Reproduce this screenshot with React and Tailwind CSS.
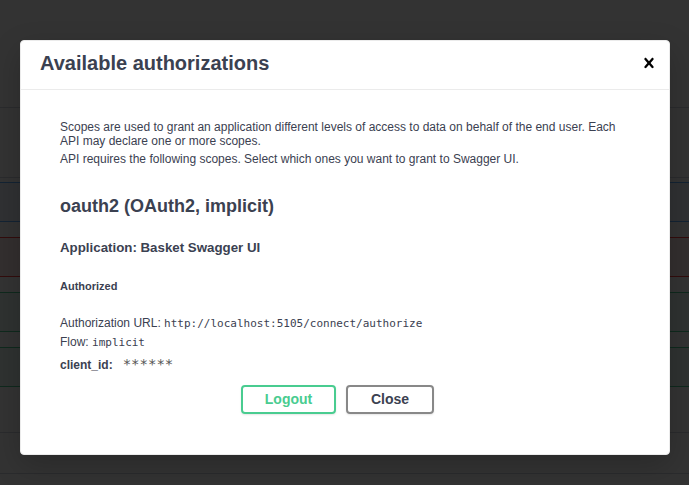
import React from "react";

const sans = { fontFamily: '"Liberation Sans", Arial, sans-serif' };

function Backdrop() {
    return (
        <div className="flex flex-col">
            <div className="h-[107px]" />
            <div className="h-px bg-[#2a2b2d]" />
            <div className="h-[69px]" />
            <div className="h-px bg-[#2a2b2d]" />
            <div className="h-[4px]" />
            <div className="h-[40px] border-y border-[#132333] bg-[#303133]" />
            <div className="h-[15px]" />
            <div className="h-[40px] border-y border-[#320c0c] bg-[#332f2f]" />
            <div className="h-[15px]" />
            <div className="h-[40px] border-y border-[#0f291d] bg-[#2f3231]" />
            <div className="h-[15px]" />
            <div className="h-[40px] border-y border-[#0f291d] bg-[#2f3231]" />
            <div className="h-[45px]" />
            <div className="h-px bg-[#2a2b2d]" />
            <div className="h-[40px]" />
            <div className="h-px bg-[#2a2b2d]" />
        </div>
    );
}

export default function App() {
    return (
        <div
            className="relative h-[485px] w-[689px] overflow-hidden bg-[#333333]"
            style={sans}
        >
            <Backdrop />

            <div className="absolute left-[20px] top-[40px] flex h-[415px] w-[650px] flex-col rounded-[4px] border border-[#ebebeb] bg-white shadow-[0_10px_30px_0_rgba(0,0,0,0.2)]">
                <div className="flex items-start justify-between border-b border-[#ebebeb] pl-[19px] pr-[10px] pt-[11px] pb-[14px]">
                    <h3 className="text-[20px] font-semibold leading-[23px] text-[#3b4151]">
                        Available authorizations
                    </h3>
                    <button className="mt-[1px] h-[20px] w-[20px]">
                        <svg width="20" height="20" viewBox="0 0 20 20">
                            <path
                                fill="#000"
                                d="M14.348 14.849c-.469.469-1.229.469-1.697 0L10 11.819l-2.651 3.029c-.469.469-1.229.469-1.697 0-.469-.469-.469-1.229 0-1.697l2.758-3.15-2.759-3.152c-.469-.469-.469-1.228 0-1.697.469-.469 1.228-.469 1.697 0L10 8.183l2.651-3.031c.469-.469 1.228-.469 1.697 0 .469.469.469 1.229 0 1.697l-2.758 3.152 2.758 3.15c.469.469.469 1.229 0 1.698z"
                            />
                        </svg>
                    </button>
                </div>

                <div className="flex flex-col px-[39px] text-[#3b4151]">
                    <p className="mt-[30px] text-[12px] leading-[14px]">
                        Scopes are used to grant an application different levels of
                        access to data on behalf of the end user. Each API may declare
                        one or more scopes.
                    </p>
                    <p className="mt-[4px] text-[12px] leading-[14px]">
                        API requires the following scopes. Select which ones you want
                        to grant to Swagger UI.
                    </p>

                    <h4 className="mt-[30px] text-[18px] font-bold leading-[21px]">
                        oauth2 (OAuth2, implicit)
                    </h4>
                    <h6 className="mt-[23px] text-[13.3px] font-bold leading-[16px]">
                        Application: Basket Swagger UI
                    </h6>
                    <h6 className="mt-[24px] text-[11px] font-bold leading-[13px]">
                        Authorized
                    </h6>

                    <div className="mt-[23px] h-[14px] text-[12px] leading-[14px]">
                        Authorization URL:{" "}
                        <code
                            className="text-[11px] leading-[14px]"
                            style={{ fontFamily: '"DejaVu Sans Mono", monospace' }}
                        >
                            http://localhost:5105/connect/authorize
                        </code>
                    </div>
                    <div className="mt-[5px] h-[14px] text-[12px] leading-[14px]">
                        Flow:{" "}
                        <code
                            className="text-[11px] leading-[14px]"
                            style={{ fontFamily: '"DejaVu Sans Mono", monospace' }}
                        >
                            implicit
                        </code>
                    </div>
                    <div className="mt-[8px] flex h-[14px] items-baseline text-[12px] leading-[14px]">
                        <label className="font-bold">client_id:</label>
                        <code
                            className="ml-[10px] text-[14px] leading-[14px] text-[#555]"
                            style={{ fontFamily: '"DejaVu Sans Mono", monospace' }}
                        >
                            ******
                        </code>
                    </div>

                    <div className="mt-[14px] flex justify-center">
                        <button className="mr-[10px] h-[29px] w-[95px] rounded-[4px] border-2 border-[#49cc90] text-[14px] font-bold text-[#49cc90] shadow-[0_1px_2px_rgba(0,0,0,0.1)]">
                            Logout
                        </button>
                        <button className="mr-[15px] h-[29px] w-[88px] rounded-[4px] border-2 border-[#888888] text-[14px] font-bold text-[#3b4151] shadow-[0_1px_2px_rgba(0,0,0,0.1)]">
                            Close
                        </button>
                    </div>
                </div>
            </div>
        </div>
    );
}
